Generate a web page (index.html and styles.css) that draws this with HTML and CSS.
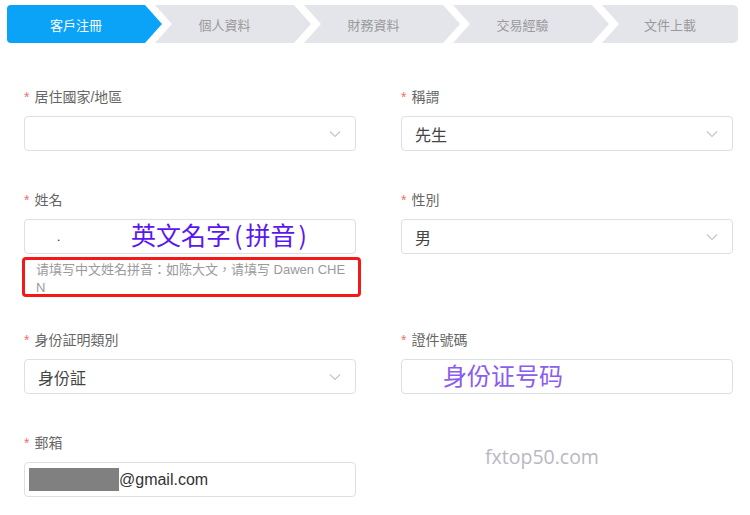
FILE: index.html
```html
<!DOCTYPE html>
<html lang="zh-Hant">
<head>
<meta charset="utf-8">
<title>客戶注冊</title>
<link rel="stylesheet" href="styles.css">
</head>
<body>
<div class="page">
  <nav class="steps">
    <div class="step step-first active">客戶注冊</div>
    <div class="step">個人資料</div>
    <div class="step">財務資料</div>
    <div class="step">交易經驗</div>
    <div class="step step-last">文件上載</div>
  </nav>

  <form class="form">
    <div class="item">
      <div class="label"><span class="req">*</span>居住國家/地區</div>
      <div class="control select"><span class="value"></span><svg class="chev" viewBox="0 0 12 8" width="12" height="8"><path d="M1 1.5 L6 6.5 L11 1.5" fill="none" stroke="#c0c4cc" stroke-width="1.1"/></svg></div>
    </div>
    <div class="item">
      <div class="label"><span class="req">*</span>稱謂</div>
      <div class="control select"><span class="value">先生</span><svg class="chev" viewBox="0 0 12 8" width="12" height="8"><path d="M1 1.5 L6 6.5 L11 1.5" fill="none" stroke="#c0c4cc" stroke-width="1.1"/></svg></div>
    </div>

    <div class="item item-hinted">
      <div class="label"><span class="req">*</span>姓名</div>
      <div class="control"><span class="value dot">.</span></div>
      <div class="hint">请填写中文姓名拼音：如陈大文，请填写 Dawen CHEN</div>
      <div class="note note-name">英文名字<span class="paren">(</span>拼音<span class="paren">)</span></div>
      <div class="redbox"></div>
    </div>
    <div class="item">
      <div class="label"><span class="req">*</span>性別</div>
      <div class="control select"><span class="value">男</span><svg class="chev" viewBox="0 0 12 8" width="12" height="8"><path d="M1 1.5 L6 6.5 L11 1.5" fill="none" stroke="#c0c4cc" stroke-width="1.1"/></svg></div>
    </div>

    <div class="item">
      <div class="label"><span class="req">*</span>身份証明類別</div>
      <div class="control select"><span class="value">身份証</span><svg class="chev" viewBox="0 0 12 8" width="12" height="8"><path d="M1 1.5 L6 6.5 L11 1.5" fill="none" stroke="#c0c4cc" stroke-width="1.1"/></svg></div>
    </div>
    <div class="item">
      <div class="label"><span class="req">*</span>證件號碼</div>
      <div class="control"><span class="value"></span></div>
      <div class="note note-id">身份证号码</div>
    </div>

    <div class="item">
      <div class="label"><span class="req">*</span>郵箱</div>
      <div class="control control-email"><span class="redact"></span><span class="email">@gmail.com</span></div>
    </div>
    <div class="item item-mark">
      <div class="watermark">fxtop50.com</div>
    </div>
  </form>
</div>
</body>
</html>
```

FILE: styles.css
```css
html, body {
  margin: 0;
  padding: 0;
  background: #ffffff;
}
body {
  font-family: "Liberation Sans", "Noto Sans CJK TC", "Noto Sans CJK SC", sans-serif;
  color: #606266;
}
.page {
  width: 750px;
  height: 515px;
  overflow: hidden;
}

/* steps */
.steps {
  display: flex;
  margin: 5px 12px 0 7px;
  height: 38px;
}
.step {
  width: 156px;
  flex: none;
  height: 38px;
  margin-left: -7px;
  background: #e4e5ea;
  color: #9a9a9a;
  font-size: 13px;
  display: flex;
  align-items: center;
  justify-content: center;
  padding-right: 17px;
  box-sizing: border-box;
  clip-path: polygon(0 0, calc(100% - 17px) 0, 100% 50%, calc(100% - 17px) 100%, 0 100%, 17px 50%);
}
.step-first {
  margin-left: 0;
  width: 155px;
  border-radius: 4px 0 0 4px;
  clip-path: polygon(0 0, calc(100% - 17px) 0, 100% 50%, calc(100% - 17px) 100%, 0 100%);
}
.step-last {
  flex: 1;
  width: auto;
  padding-right: 0;
  padding-left: 0;
  border-radius: 0 5px 5px 0;
  clip-path: polygon(0 0, 100% 0, 100% 100%, 0 100%, 17px 50%);
}
.step.active {
  background: #0ba3f8;
  color: #ffffff;
}

/* form */
.form {
  display: grid;
  grid-template-columns: 332px 332px;
  column-gap: 45px;
  row-gap: 38px;
  margin: 43px 0 0 24px;
  align-items: start;
}
.item {
  position: relative;
}
.label {
  height: 22px;
  line-height: 22px;
  font-size: 14px;
  color: #666666;
  margin-bottom: 8px;
}
.req {
  color: #f56c6c;
  margin-right: 5px;
}
.control {
  height: 35px;
  box-sizing: border-box;
  border: 1px solid #dcdfe6;
  border-radius: 4px;
  display: flex;
  align-items: center;
  padding: 0 13px;
  font-size: 16px;
  color: #444;
  background: #fff;
}
.value {
  flex: 1;
}
.dot {
  padding-left: 19px;
  font-size: 12px;
  color: #222;
}
.chev {
  flex: none;
  margin-right: 1px;
}
.control-email {
  padding-left: 4px;
}
.redact {
  display: inline-block;
  width: 90px;
  height: 23px;
  background: #808080;
}
.email {
  font-family: "Liberation Sans", Arial, sans-serif;
  font-size: 16px;
  color: #333;
}
.hint {
  font-size: 13px;
  line-height: 18px;
  color: #9a9a9a;
  padding: 7px 0 0 12px;
  width: 318px;
  word-break: break-all;
  margin-bottom: -6px;
}
.note {
  position: absolute;
  font-family: "Noto Sans CJK SC", sans-serif;
  font-size: 24px;
  line-height: 28px;
  white-space: nowrap;
}
.note-name {
  left: 107px;
  top: 31px;
  color: #5a16f0;
  font-size: 25px;
}
.paren {
  margin: 0 3px;
}
.note-id {
  left: 42px;
  top: 32px;
  color: #8a5cf0;
}
.redbox {
  position: absolute;
  left: -2px;
  top: 68px;
  width: 339px;
  height: 40px;
  box-sizing: border-box;
  border: 3px solid #f51818;
  border-radius: 4px;
}
.item-mark {
  padding: 12px 0 0 84px;
}
.watermark {
  font-family: "Open Sans", sans-serif;
  font-size: 19.5px;
  line-height: 26px;
  color: #b8b8c0;
}
```
